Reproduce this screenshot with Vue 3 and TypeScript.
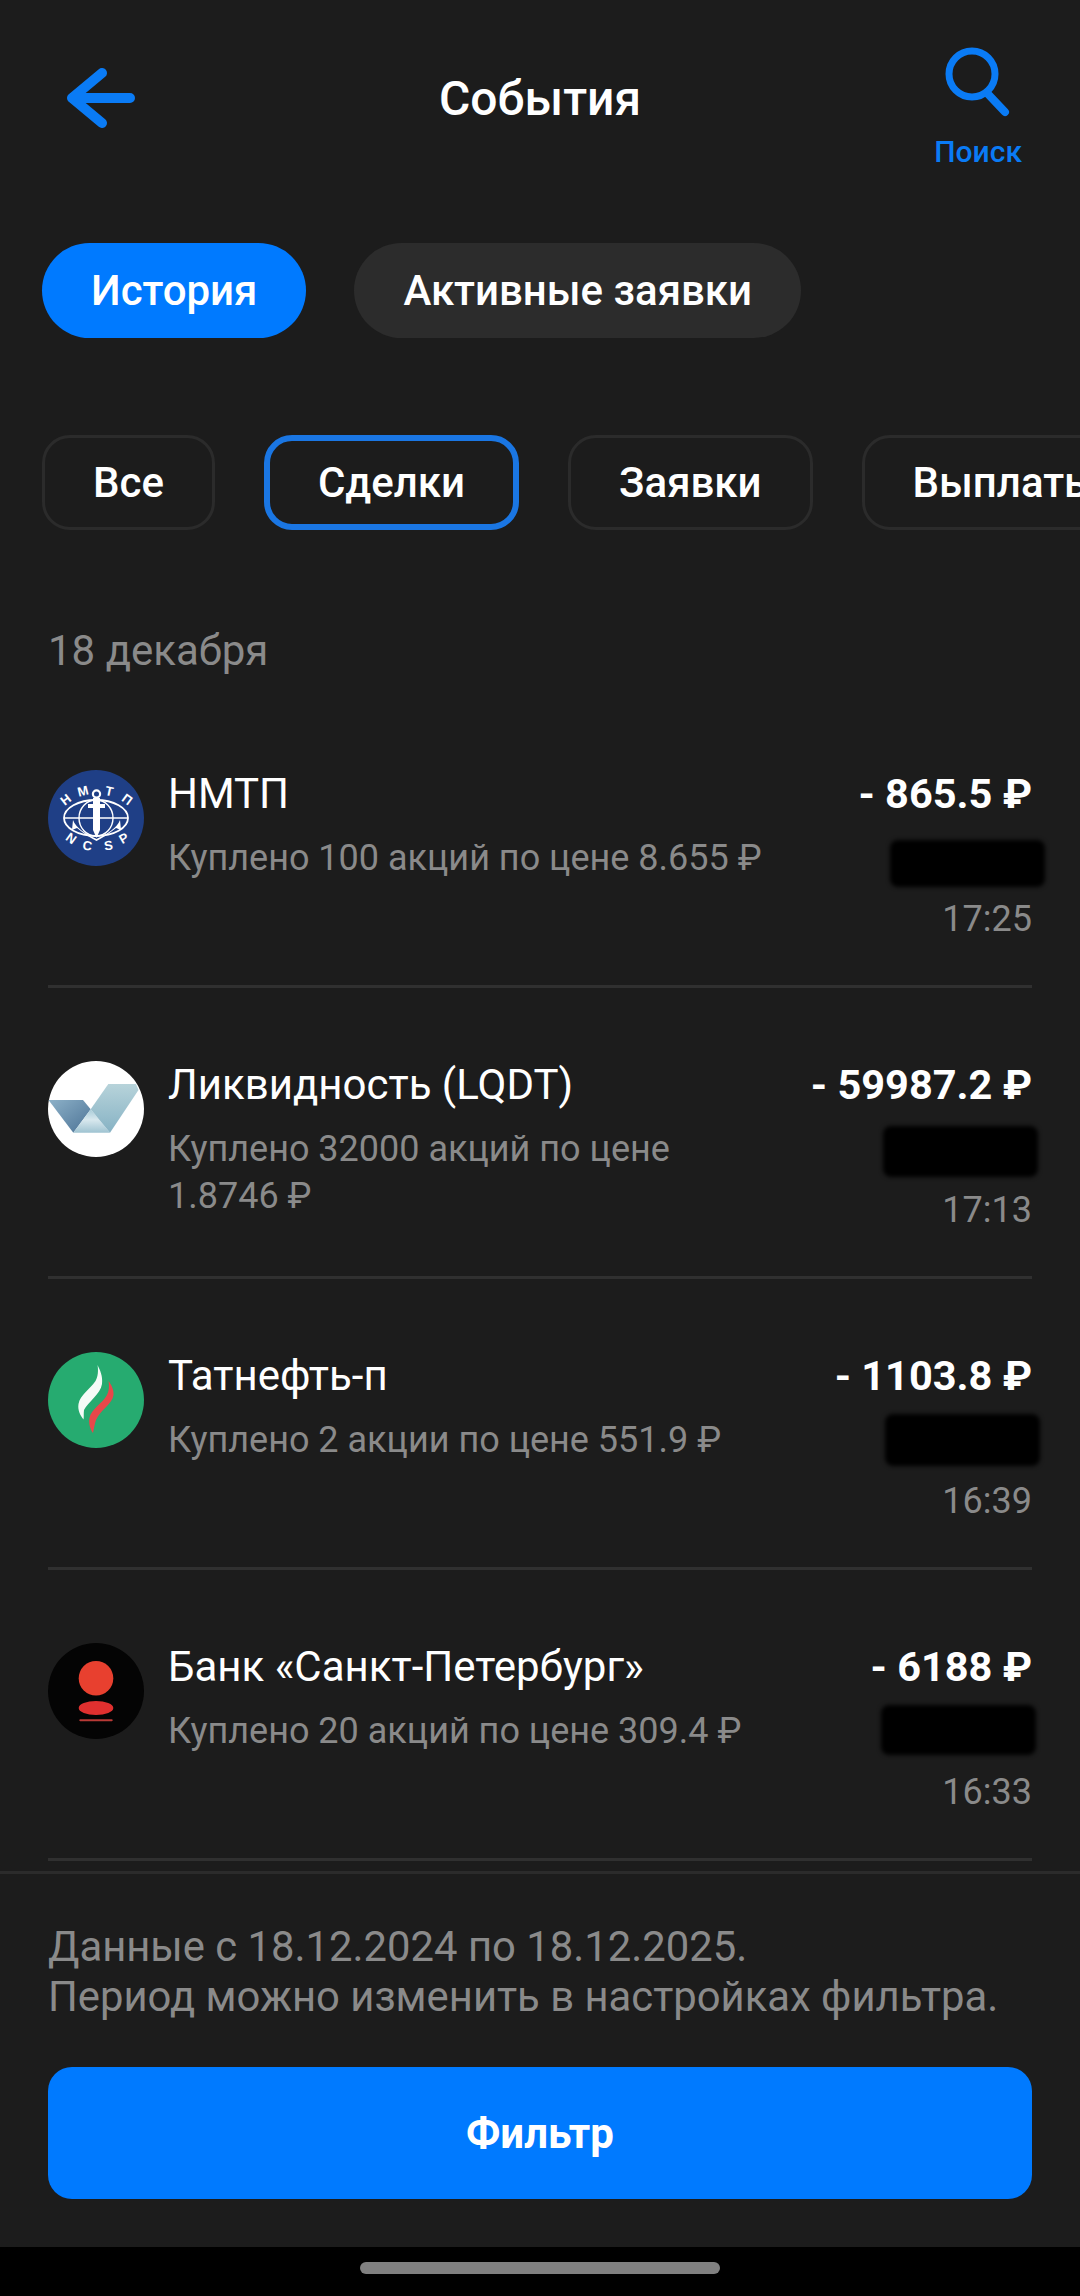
<template>
  <div class="screen">
    <header class="top">
      <button class="top__back" aria-label="Назад">
        <svg width="70" height="60" viewBox="0 0 70 60" fill="none">
          <path d="M35 5 L5 30 L35 55 M5 30 H63" stroke="#0a7bf5" stroke-width="10" stroke-linecap="round" stroke-linejoin="round" />
        </svg>
      </button>
      <h1 class="top__title">События</h1>
      <div class="top__search">
        <svg width="70" height="70" viewBox="0 0 70 70" fill="none">
          <circle cx="29" cy="27" r="23" stroke="#0a7bf5" stroke-width="7" />
          <path d="M44 46 L62 65" stroke="#0a7bf5" stroke-width="8" stroke-linecap="round" />
        </svg>
        <span>Поиск</span>
      </div>
    </header>

    <div class="tabs">
      <div
        v-for="tab in tabs"
        :key="tab"
        class="tabs__item"
        :class="{ 'is-active': tab === activeTab }"
      >
        {{ tab }}
      </div>
    </div>

    <div class="filters">
      <div
        v-for="filter in filters"
        :key="filter"
        class="filters__item"
        :class="{ 'is-active': filter === activeFilter }"
      >
        {{ filter }}
      </div>
    </div>

    <div class="date">18 декабря</div>

    <div class="list">
      <div v-for="row in rows" :key="row.name" class="row">
        <div class="row__icon">
          <svg v-if="row.logo === 'nmtp'" viewBox="0 0 96 96">
            <circle cx="48" cy="48" r="48" fill="#1f3f86" />
            <ellipse cx="48" cy="48" rx="32" ry="18" fill="none" stroke="#fff" stroke-width="1.8" />
            <ellipse cx="48" cy="48" rx="17" ry="18" fill="none" stroke="#fff" stroke-width="1.4" />
            <path d="M16 48 H80" stroke="#fff" stroke-width="1.4" />
            <circle cx="48.5" cy="24" r="3.6" fill="none" stroke="#fff" stroke-width="2.2" />
            <path d="M45 28 H52 L52 34 H57 V38 H52 V60 L48.5 68 L45 60 V38 H40 V34 H45 Z" fill="#fff" />
            <path d="M25 50 C28 58 38 64 48.5 69 C59 64 69 58 72 50 L73 60 L68 58 C62 63 56 67 48.5 71 C41 67 35 63 29 58 L24 60 Z" fill="#fff" />
            <text
              v-for="mark in logoLetters"
              :key="mark.ch + mark.x"
              class="row__mark"
              :transform="`translate(${mark.x} ${mark.y}) rotate(${mark.r})`"
              text-anchor="middle"
              fill="#fff"
            >{{ mark.ch }}</text>
          </svg>
          <svg v-else-if="row.logo === 'lqdt'" viewBox="0 0 96 96">
            <defs>
              <linearGradient id="lq1" x1="0" y1="0" x2="1" y2="1">
                <stop offset="0" stop-color="#8db1c8" />
                <stop offset="1" stop-color="#4c7396" />
              </linearGradient>
              <linearGradient id="lq2" x1="0" y1="0" x2="0" y2="1">
                <stop offset="0" stop-color="#a8cbd8" />
                <stop offset="0.45" stop-color="#d8e8ee" />
                <stop offset="1" stop-color="#9fc3d1" />
              </linearGradient>
              <linearGradient id="lq3" x1="0" y1="0" x2="0" y2="1">
                <stop offset="0" stop-color="#b7d3da" />
                <stop offset="1" stop-color="#86b2c4" />
              </linearGradient>
            </defs>
            <circle cx="48" cy="48" r="48" fill="#fff" />
            <path d="M0.5 39 H35 L42.7 48.3 L25.3 71.7 Z" fill="url(#lq1)" />
            <path d="M42.7 48.3 L62 71.7 H25.3 Z" fill="url(#lq2)" />
            <path d="M60.3 23 H88 L90.5 29 L62 71.7 L42.7 48.3 Z" fill="url(#lq3)" />
          </svg>
          <svg v-else-if="row.logo === 'tatn'" viewBox="0 0 96 96">
            <circle cx="48" cy="48" r="48" fill="#26ab70" />
            <path d="M49.5 13 C52 18 55 24 54 32 C52.5 42 40 50 36 58 C35.5 62 36 65 35.5 67.5 C32 63 29.5 58 30.5 52 C32 43 42 37 47.5 29 C50 25 50.5 18 49.5 13 Z" fill="#f4fbf7" />
            <path d="M60.5 29 C63.5 33 66 38 65.5 43 C64.5 52 52 58 48 68 C46.5 72 46 77 45 81 C42 77 40.5 71 41.5 66 C43 57 54 52 59 43 C61 39 61.5 34 60.5 29 Z" fill="#e8474a" />
          </svg>
          <svg v-else viewBox="0 0 96 96">
            <circle cx="48" cy="48" r="48" fill="#040404" />
            <circle cx="48" cy="35.3" r="17.3" fill="#e8402f" />
            <ellipse cx="48" cy="65" rx="17.3" ry="7" fill="#e0302f" />
            <rect x="31.3" y="76.3" width="33.4" height="2" rx="1" fill="#b93a36" />
          </svg>
        </div>
        <div class="row__main">
          <div class="row__name">{{ row.name }}</div>
          <div class="row__desc">{{ row.desc }}</div>
        </div>
        <div class="row__side">
          <div class="row__amount">{{ row.amount }}</div>
          <!-- счёт замазан на скриншоте -->
          <div class="row__slot">
            <div
              class="row__hidden"
              :style="{
                height: row.blot.h + 'px',
                transform: `translate(${row.blot.x}px, ${row.blot.y}px)`,
              }"
            ></div>
          </div>
          <div class="row__time">{{ row.time }}</div>
        </div>
      </div>
    </div>

    <footer class="bottom">
      <p class="bottom__note">
        Данные с 18.12.2024 по 18.12.2025.<br />
        Период можно изменить в настройках фильтра.
      </p>
      <button class="bottom__btn">Фильтр</button>
    </footer>

    <div class="nav">
      <div class="nav__handle"></div>
    </div>
  </div>
</template>

<script setup lang="ts">
interface EventRow {
  logo: 'nmtp' | 'lqdt' | 'tatn' | 'bspb'
  name: string
  desc: string
  amount: string
  time: string
  blot: { x: number; y: number; h: number }
}

const tabs = ['История', 'Активные заявки']
const activeTab = 'История'
const filters = ['Все', 'Сделки', 'Заявки', 'Выплаты']
const activeFilter = 'Сделки'

const logoLetters = [
  { ch: 'Н', x: 20.5, y: 33, r: -38 },
  { ch: 'М', x: 36, y: 25.5, r: -14 },
  { ch: 'Т', x: 60.5, y: 25.5, r: 12 },
  { ch: 'П', x: 76.5, y: 33, r: 36 },
  { ch: 'N', x: 20.5, y: 72, r: 36 },
  { ch: 'C', x: 38.5, y: 80, r: 10 },
  { ch: 'S', x: 61, y: 80, r: -8 },
  { ch: 'P', x: 78, y: 72, r: -30 },
]

const rows: EventRow[] = [
  {
    logo: 'nmtp',
    name: 'НМТП',
    desc: 'Куплено 100 акций по цене 8.655 ₽',
    amount: '- 865.5 ₽',
    time: '17:25',
    blot: { x: 13, y: 0, h: 47 },
  },
  {
    logo: 'lqdt',
    name: 'Ликвидность (LQDT)',
    desc: 'Куплено 32000 акций по цене 1.8746 ₽',
    amount: '- 59987.2 ₽',
    time: '17:13',
    blot: { x: 6, y: -5, h: 51 },
  },
  {
    logo: 'tatn',
    name: 'Татнефть-п',
    desc: 'Куплено 2 акции по цене 551.9 ₽',
    amount: '- 1103.8 ₽',
    time: '16:39',
    blot: { x: 8, y: -8, h: 52 },
  },
  {
    logo: 'bspb',
    name: 'Банк «Санкт-Петербург»',
    desc: 'Куплено 20 акций по цене 309.4 ₽',
    amount: '- 6188 ₽',
    time: '16:33',
    blot: { x: 4, y: -8, h: 50 },
  },
]
</script>

<style>
html,
body {
  background: #1c1c1c;
}
</style>

<style scoped>
.screen {
  display: flex;
  flex-direction: column;
  width: 1080px;
  height: 2296px;
  overflow: hidden;
  background: #1c1c1c;
  color: #fff;
  font-family: Roboto, 'Noto Sans', sans-serif;
}

.top {
  display: grid;
  grid-template-columns: 1fr auto 1fr;
  height: 243px;
  flex-shrink: 0;
  padding: 0 48px;
  box-sizing: border-box;
}

.top__back {
  align-self: start;
  justify-self: start;
  margin-top: 68px;
  margin-left: 19px;
  padding: 0;
  border: 0;
  background: none;
  line-height: 0;
}

.top__title {
  margin: 74px 0 0;
  font-size: 48px;
  line-height: 50px;
  font-weight: 500;
  text-align: center;
}

.top__search {
  justify-self: end;
  display: flex;
  flex-direction: column;
  align-items: center;
  padding-top: 47px;
  padding-right: 10px;
  color: #0a7bf5;
  font-size: 30px;
  font-weight: 500;
  line-height: 34px;
}

.top__search svg {
  margin-bottom: 18px;
}

.tabs {
  display: flex;
  flex-shrink: 0;
  gap: 48px;
  padding-left: 42px;
}

.tabs__item {
  display: flex;
  align-items: center;
  height: 95px;
  padding: 0 49px;
  border-radius: 48px;
  background: #2c2c2c;
  font-size: 42px;
  font-weight: 500;
}

.tabs__item.is-active {
  background: #007aff;
}

.filters {
  display: flex;
  flex-shrink: 0;
  gap: 49px;
  margin-top: 97px;
  padding-left: 42px;
  white-space: nowrap;
}

.filters__item {
  display: flex;
  flex-shrink: 0;
  align-items: center;
  height: 95px;
  box-sizing: border-box;
  padding: 0 48px;
  border: 3px solid #2b2b2b;
  border-radius: 28px;
  font-size: 42px;
  font-weight: 500;
}

.filters__item.is-active {
  border: 6px solid #1a76e3;
}

.date {
  flex-shrink: 0;
  margin-top: 97px;
  padding-left: 48px;
  color: #8a8a8a;
  font-size: 42px;
  line-height: 48px;
}

.list {
  flex: 1;
  min-height: 0;
  margin-top: 22px;
  overflow: hidden;
}

.row {
  display: flex;
  height: 291px;
  box-sizing: border-box;
  margin: 0 48px;
  padding-top: 73px;
  border-bottom: 3px solid #303030;
}

.row__icon {
  flex-shrink: 0;
  width: 96px;
  height: 96px;
}

.row__icon svg {
  display: block;
  width: 96px;
  height: 96px;
}

.row__mark {
  font-family: 'Liberation Sans', sans-serif;
  font-size: 13px;
  font-weight: 700;
}

.row__main {
  width: 600px;
  margin-left: 24px;
}

.row__name {
  font-size: 42px;
  line-height: 48px;
}

.row__desc {
  margin-top: 17px;
  color: #8a8a8a;
  font-size: 36px;
  line-height: 47px;
}

.row__side {
  display: flex;
  flex: 1;
  flex-direction: column;
  align-items: flex-end;
  min-width: 0;
  white-space: nowrap;
}

.row__amount {
  font-size: 41.5px;
  font-weight: 700;
  line-height: 48px;
}

.row__slot {
  height: 47px;
  margin-top: 22px;
}

.row__hidden {
  width: 155px;
  border-radius: 8px;
  background: #000;
  filter: blur(2px);
}

.row__time {
  margin-top: 10px;
  color: #8a8a8a;
  font-size: 36px;
  line-height: 44px;
}

.bottom {
  flex-shrink: 0;
  padding: 48px 48px 48px;
  border-top: 3px solid #2b2b2b;
  background: #1c1c1c;
}

.bottom__note {
  margin: 0;
  color: #8a8a8a;
  font-size: 41.8px;
  line-height: 50px;
}

.bottom__btn {
  display: block;
  width: 100%;
  height: 132px;
  margin-top: 45px;
  border: 0;
  border-radius: 24px;
  background: #007aff;
  color: #fff;
  font-family: inherit;
  font-size: 42px;
  font-weight: 700;
}

.nav {
  display: flex;
  flex-shrink: 0;
  justify-content: center;
  height: 49px;
  padding-top: 15px;
  box-sizing: border-box;
  background: #000;
}

.nav__handle {
  width: 360px;
  height: 12px;
  border-radius: 6px;
  background: #808080;
}
</style>
